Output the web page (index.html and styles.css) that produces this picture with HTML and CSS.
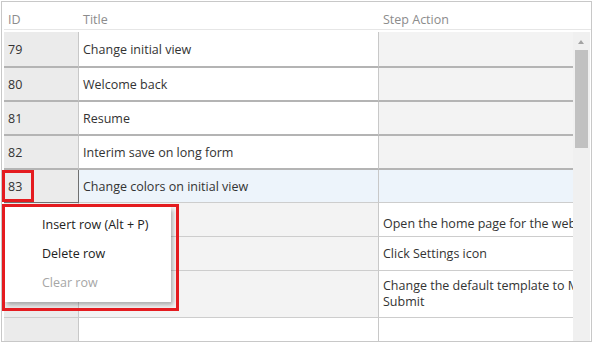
FILE: index.html
```html
<!DOCTYPE html>
<html lang="en">
<head>
    <meta charset="UTF-8">
    <title>Test steps grid</title>
    <link rel="stylesheet" href="styles.css">
</head>
<body>
    <div class="frame">
        <!-- Column headers -->
        <div class="head">
            <div class="col-id">ID</div>
            <div class="col-title">Title</div>
            <div class="col-step">Step Action</div>
        </div>

        <div class="body">
            <div class="rows">
                <div class="row dim first">
                    <div class="cell col-id">79</div>
                    <div class="cell col-title">Change initial view</div>
                    <div class="cell col-step empty"></div>
                </div>
                <div class="row dim">
                    <div class="cell col-id">80</div>
                    <div class="cell col-title">Welcome back</div>
                    <div class="cell col-step empty"></div>
                </div>
                <div class="row dim">
                    <div class="cell col-id">81</div>
                    <div class="cell col-title">Resume</div>
                    <div class="cell col-step empty"></div>
                </div>
                <div class="row dim">
                    <div class="cell col-id">82</div>
                    <div class="cell col-title">Interim save on long form</div>
                    <div class="cell col-step empty"></div>
                </div>
                <div class="row selected">
                    <div class="cell col-id focused">83</div>
                    <div class="cell col-title">Change colors on initial view</div>
                    <div class="cell col-step"></div>
                </div>
                <div class="row step first-step">
                    <div class="cell col-id"></div>
                    <div class="cell col-title"></div>
                    <div class="cell col-step">Open the home page for the web</div>
                </div>
                <div class="row step">
                    <div class="cell col-id"></div>
                    <div class="cell col-title"></div>
                    <div class="cell col-step">Click Settings icon</div>
                </div>
                <div class="row step tall">
                    <div class="cell col-id"></div>
                    <div class="cell col-title"></div>
                    <div class="cell col-step"><span class="clip">Change the default template to M</span><span class="clip">Submit</span></div>
                </div>
                <div class="row last">
                    <div class="cell col-id"></div>
                    <div class="cell col-title white"></div>
                    <div class="cell col-step"></div>
                </div>
            </div>

            <!-- Vertical scrollbar -->
            <div class="scrollbar">
                <div class="arrow"></div>
                <div class="thumb"></div>
            </div>
        </div>

        <!-- Context menu for the focused row -->
        <div class="menu">
            <div class="menu-item">Insert row (Alt + P)</div>
            <div class="menu-item">Delete row</div>
            <div class="menu-item disabled">Clear row</div>
        </div>

        <!-- Annotation boxes -->
        <div class="mark mark-id"></div>
        <div class="mark mark-menu"></div>
    </div>
</body>
</html>
```

FILE: styles.css
```css
/* Page */
body {
    margin: 0;
    padding: 1px;
    background: #ffffff;
    font-family: 'Open Sans', 'Noto Sans', sans-serif;
    font-size: 12.5px;
    color: #333333;
}

/* Grid frame */
.frame {
    position: relative;
    box-sizing: border-box;
    width: 591px;
    height: 341px;
    border: 1px solid #c8c8c8;
    padding: 0 0 0 2px;
    overflow: hidden;
}

/* Header row */
.head {
    display: flex;
    height: 27px;
    align-items: flex-end;
    border-bottom: 1px solid #e6e6e6;
    color: #8c8c8c;
    margin-bottom: 2px;
    line-height: 16px;
}

.head > div {
    padding-left: 4px;
    padding-bottom: 1px;
}

/* Column widths */
.col-id {
    box-sizing: border-box;
    width: 75px;
    flex: none;
}

.col-title {
    box-sizing: border-box;
    width: 300px;
    flex: none;
}

.col-step {
    box-sizing: border-box;
    width: 194px;
    flex: none;
}

/* Body: rows plus scrollbar */
.body {
    display: flex;
}

.rows {
    width: 569px;
}

.row {
    display: flex;
    height: 34px;
}

.row.first {
    height: 36px;
}

.row.selected {
    height: 33px;
}

.row.tall {
    height: 47px;
}

.row.last {
    height: 30px;
}

.cell {
    display: flex;
    align-items: center;
    padding-left: 4px;
    white-space: nowrap;
    overflow: hidden;
    border-right: 1px solid #c8c8c8;
    border-bottom: 1px solid #cdcdcd;
    background: #ffffff;
}

.cell.col-step {
    border-right: none;
}

.cell.col-id {
    background: #ebebeb;
}

/* Upper rows have heavier separators */
.row.dim .cell {
    border-bottom: 2px solid #b4b4b4;
}

.row.dim .cell.empty {
    background: #f3f3f3;
}

/* Selected row */
.row.selected .cell {
    background: #edf4fb;
}

.row.selected .cell.col-id {
    background: #ebebeb;
    border-right-color: #707070;
    border-bottom-color: #707070;
}

/* Step rows */
.row.step .cell.col-title {
    background: #f3f3f3;
}

.row.first-step .cell {
    align-items: flex-end;
    padding-bottom: 4px;
}

.row.tall .cell.col-step {
    flex-direction: column;
    align-items: flex-start;
    justify-content: center;
    line-height: 16px;
}

.clip {
    display: block;
}

.row.last .cell {
    border-bottom: none;
}

/* Scrollbar */
.scrollbar {
    position: relative;
    width: 17px;
    height: 309px;
    background: #f0f0f0;
}

.arrow {
    position: absolute;
    left: 5px;
    top: 8px;
    width: 0;
    height: 0;
    border-left: 3px solid transparent;
    border-right: 3px solid transparent;
    border-bottom: 4px solid #a3a3a3;
}

.thumb {
    position: absolute;
    left: 2px;
    top: 18px;
    width: 13px;
    height: 98px;
    background: #c1c1c1;
}

/* Context menu */
.menu {
    position: absolute;
    left: 3px;
    top: 205px;
    width: 166px;
    height: 95px;
    box-sizing: border-box;
    padding-top: 3px;
    background: #ffffff;
    box-shadow: 2px 3px 4px rgba(0, 0, 0, 0.28);
}

.menu-item {
    height: 29px;
    line-height: 29px;
    padding-left: 37px;
    color: #222222;
}

.menu-item.disabled {
    color: #a6a6a6;
}

/* Red annotation boxes */
.mark {
    position: absolute;
    box-sizing: border-box;
    border: 3px solid #e41b1f;
}

.mark-id {
    left: 0;
    top: 168px;
    width: 32px;
    height: 32px;
}

.mark-menu {
    left: 0;
    top: 202px;
    width: 177px;
    height: 107px;
}
```
